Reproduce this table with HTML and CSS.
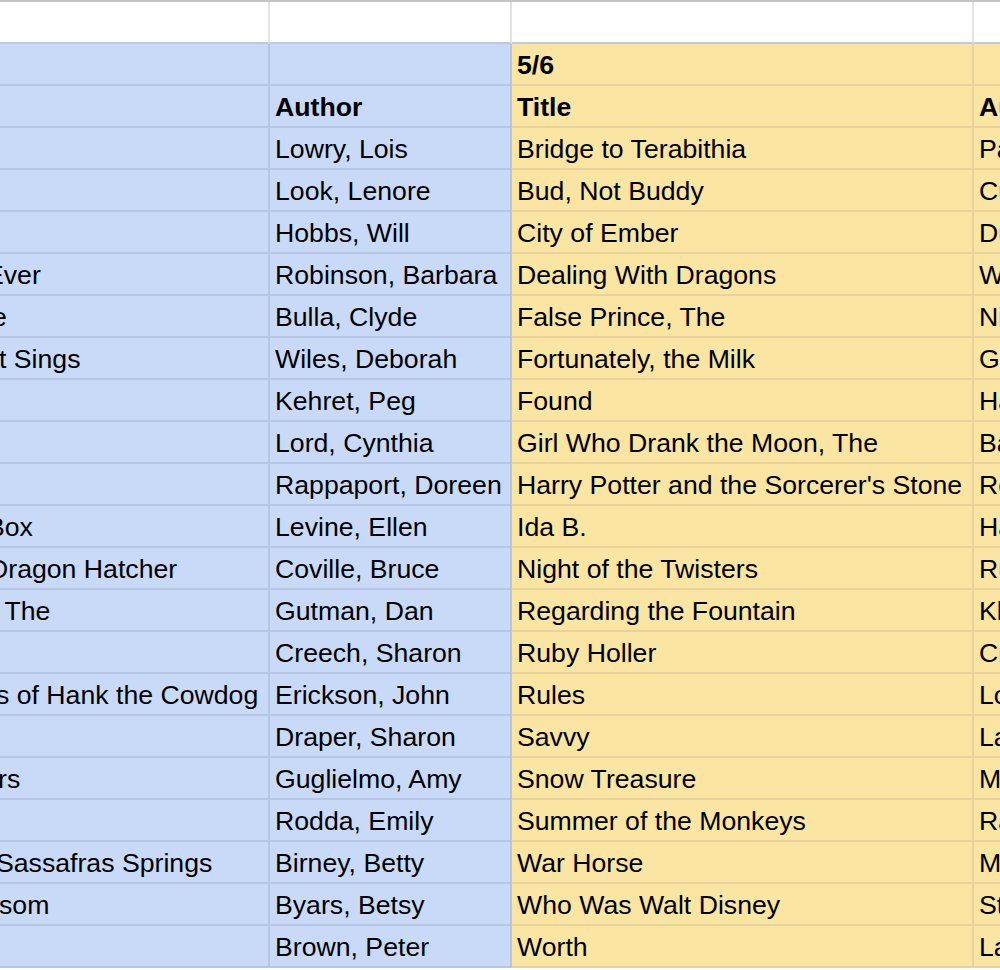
FILE: index.html
```html
<!DOCTYPE html>
<html>
<head>
<meta charset="utf-8">
<link rel="stylesheet" href="styles.css">
</head>
<body>
<div class="sheet">
  <div class="row top">
    <div class="cell a"></div><div class="cell b"></div><div class="cell c"></div><div class="cell d"></div>
  </div>
  <div class="row">
    <div class="cell a blue"></div><div class="cell b blue"></div><div class="cell c yellow bold">5/6</div><div class="cell d yellow"></div>
  </div>
  <div class="row">
    <div class="cell a blue"></div><div class="cell b blue bold">Author</div><div class="cell c yellow bold">Title</div><div class="cell d yellow bold">Author</div>
  </div>
  <div class="row"><div class="cell a blue"></div><div class="cell b blue">Lowry, Lois</div><div class="cell c yellow">Bridge to Terabithia</div><div class="cell d yellow">Paterson, Katherine</div></div>
  <div class="row"><div class="cell a blue"></div><div class="cell b blue">Look, Lenore</div><div class="cell c yellow">Bud, Not Buddy</div><div class="cell d yellow">Curtis, Christopher Paul</div></div>
  <div class="row"><div class="cell a blue"></div><div class="cell b blue">Hobbs, Will</div><div class="cell c yellow">City of Ember</div><div class="cell d yellow">DuPrau, Jeanne</div></div>
  <div class="row"><div class="cell a blue"><span class="tail" style="margin-left:-14px">Ever</span></div><div class="cell b blue">Robinson, Barbara</div><div class="cell c yellow">Dealing With Dragons</div><div class="cell d yellow">Wrede, Patricia</div></div>
  <div class="row"><div class="cell a blue"><span class="tail" style="margin-left:-8px">e</span></div><div class="cell b blue">Bulla, Clyde</div><div class="cell c yellow">False Prince, The</div><div class="cell d yellow">Nielsen, Jennifer</div></div>
  <div class="row"><div class="cell a blue"><span class="tail" style="margin-left:-1px">t Sings</span></div><div class="cell b blue">Wiles, Deborah</div><div class="cell c yellow">Fortunately, the Milk</div><div class="cell d yellow">Gaiman, Neil</div></div>
  <div class="row"><div class="cell a blue"></div><div class="cell b blue">Kehret, Peg</div><div class="cell c yellow">Found</div><div class="cell d yellow">Haddix, Margaret Peterson</div></div>
  <div class="row"><div class="cell a blue"></div><div class="cell b blue">Lord, Cynthia</div><div class="cell c yellow">Girl Who Drank the Moon, The</div><div class="cell d yellow">Barnhill, Kelly</div></div>
  <div class="row"><div class="cell a blue"></div><div class="cell b blue">Rappaport, Doreen</div><div class="cell c yellow">Harry Potter and the Sorcerer's Stone</div><div class="cell d yellow">Rowling, J.K.</div></div>
  <div class="row"><div class="cell a blue"><span class="tail" style="margin-left:-13px">Box</span></div><div class="cell b blue">Levine, Ellen</div><div class="cell c yellow">Ida B.</div><div class="cell d yellow">Hannigan, Katherine</div></div>
  <div class="row"><div class="cell a blue"><span class="tail" style="margin-left:-11px">Dragon Hatcher</span></div><div class="cell b blue">Coville, Bruce</div><div class="cell c yellow">Night of the Twisters</div><div class="cell d yellow">Ruckman, Ivy</div></div>
  <div class="row"><div class="cell a blue"><span class="tail" style="margin-left:-3px">&nbsp;The</span></div><div class="cell b blue">Gutman, Dan</div><div class="cell c yellow">Regarding the Fountain</div><div class="cell d yellow">Klise, Kate</div></div>
  <div class="row"><div class="cell a blue"></div><div class="cell b blue">Creech, Sharon</div><div class="cell c yellow">Ruby Holler</div><div class="cell d yellow">Creech, Sharon</div></div>
  <div class="row"><div class="cell a blue"><span class="tail" style="margin-left:-4px">s of Hank the Cowdog</span></div><div class="cell b blue">Erickson, John</div><div class="cell c yellow">Rules</div><div class="cell d yellow">Lord, Cynthia</div></div>
  <div class="row"><div class="cell a blue"></div><div class="cell b blue">Draper, Sharon</div><div class="cell c yellow">Savvy</div><div class="cell d yellow">Law, Ingrid</div></div>
  <div class="row"><div class="cell a blue"><span class="tail" style="margin-left:-2px">rs</span></div><div class="cell b blue">Guglielmo, Amy</div><div class="cell c yellow">Snow Treasure</div><div class="cell d yellow">McSwigan, Marie</div></div>
  <div class="row"><div class="cell a blue"></div><div class="cell b blue">Rodda, Emily</div><div class="cell c yellow">Summer of the Monkeys</div><div class="cell d yellow">Rawls, Wilson</div></div>
  <div class="row"><div class="cell a blue"><span class="tail" style="margin-left:-4px">Sassafras Springs</span></div><div class="cell b blue">Birney, Betty</div><div class="cell c yellow">War Horse</div><div class="cell d yellow">Morpurgo, Michael</div></div>
  <div class="row"><div class="cell a blue"><span class="tail" style="margin-left:-1px">som</span></div><div class="cell b blue">Byars, Betsy</div><div class="cell c yellow">Who Was Walt Disney</div><div class="cell d yellow">Stewart, Whitney</div></div>
  <div class="row"><div class="cell a blue"></div><div class="cell b blue">Brown, Peter</div><div class="cell c yellow">Worth</div><div class="cell d yellow">LaFaye, A.</div></div>
</div>
</body>
</html>
```

FILE: styles.css
```css
html, body {
  margin: 0;
  padding: 0;
  background: #ffffff;
  overflow: hidden;
}
.sheet {
  width: 1300px;
  font-family: "Liberation Sans", Arial, sans-serif;
  font-size: 26.67px;
  color: #000000;
}
.row {
  display: grid;
  grid-template-columns: 270px 242px 462px 326px;
  height: 42px;
}
.row.top {
  height: 44px;
  border-top: 2px solid #c4c4c4;
  box-sizing: border-box;
}
.cell {
  box-sizing: border-box;
  border-right: 2px solid #e2e3e3;
  border-bottom: 2px solid #e2e3e3;
  padding: 0 5px 3px 5px;
  display: flex;
  align-items: flex-end;
  white-space: nowrap;
  overflow: hidden;
}
.cell.a {
  padding-left: 0;
}
.blue {
  background: #c9daf8;
  border-color: #b5c6e5;
}
.yellow {
  background: #fae5a3;
  border-color: #e7d39b;
}
.row.top .cell {
  border-bottom-color: #bccae3;
}
.bold {
  font-weight: bold;
}
.tail {
  display: inline-block;
}
```
